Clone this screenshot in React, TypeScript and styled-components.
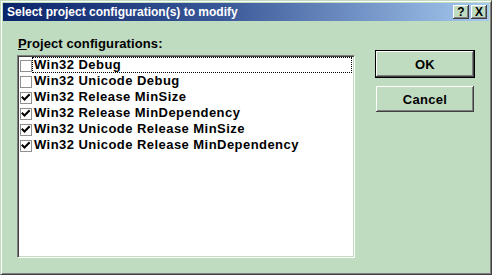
import styled, { createGlobalStyle } from "styled-components";

const GlobalStyle = createGlobalStyle`
  body {
    margin: 0;
    font-family: "Liberation Sans", Arial, sans-serif;
    background: #c0dcc0;
  }
`;

const Window = styled.div`
  width: 492px;
  height: 275px;
  box-sizing: border-box;
  background: #c0dcc0;
  border: 1px solid;
  border-color: #c0dcc0 #404040 #404040 #c0dcc0;
  box-shadow: inset 1px 1px #ffffff, inset -1px -1px #808080;
  padding: 2px;
  display: flex;
  flex-direction: column;
`;

const TitleBar = styled.div`
  height: 18px;
  display: flex;
  align-items: center;
  padding: 0 2px;
  background: linear-gradient(to right, #0a246a 0%, #3a5898 45%, #a6caf0 100%);
`;

const Title = styled.div`
  flex: 1;
  padding-left: 2px;
  color: #ffffff;
  font-weight: bold;
  font-size: 12px;
  line-height: 18px;
  white-space: nowrap;
`;

const CaptionButton = styled.div`
  width: 16px;
  height: 14px;
  box-sizing: border-box;
  margin-left: 2px;
  background: #c0dcc0;
  box-shadow: inset -1px -1px #404040, inset 1px 1px #ffffff,
    inset -2px -2px #808080;
  display: flex;
  align-items: center;
  justify-content: center;
  font-weight: bold;
  font-size: 12px;
  line-height: 12px;
  color: #000;
`;

const Body = styled.div`
  flex: 1;
  display: flex;
  padding: 15px 0 0 14px;
`;

const LeftColumn = styled.div`
  display: flex;
  flex-direction: column;
`;

const Label = styled.div`
  height: 15px;
  margin-bottom: 4px;
  padding-left: 1px;
  font-weight: bold;
  font-size: 13px;
  letter-spacing: 0.1px;
  line-height: 15px;
  color: #000;

  u {
    text-decoration-thickness: 1px;
    text-underline-offset: 1px;
  }
`;

const ListBox = styled.div`
  width: 338px;
  height: 203px;
  box-sizing: border-box;
  padding: 1px;
  background: #ffffff;
  border: 1px solid;
  border-color: #808080 #ffffff #ffffff #808080;
  box-shadow: inset 1px 1px #404040, inset -1px -1px #c0dcc0;
`;

const Row = styled.div`
  height: 16px;
  display: flex;
  align-items: flex-start;
`;

const CheckBox = styled.div`
  width: 12px;
  height: 12px;
  box-sizing: border-box;
  margin: 3px 0 0 1px;
  border: 1px solid #909090;
  background: #ffffff;
  display: flex;
`;

const ItemText = styled.div<{ $focused?: boolean }>`
  flex: 1;
  height: 16px;
  box-sizing: border-box;
  margin-right: 1px;
  padding-left: 1px;
  border: 1px dotted ${(p) => (p.$focused ? "#000" : "transparent")};
  font-weight: bold;
  font-size: 13px;
  letter-spacing: 0.45px;
  line-height: 14px;
  color: #000;
  white-space: nowrap;
`;

const RightColumn = styled.div`
  margin-left: 20px;
  padding-top: 14px;
  display: flex;
  flex-direction: column;
  gap: 7px;
`;

const Button = styled.div<{ $default?: boolean }>`
  width: 100px;
  height: 28px;
  box-sizing: border-box;
  background: #c0dcc0;
  border: 1px solid ${(p) => (p.$default ? "#000" : "transparent")};
  box-shadow: inset -1px -1px #404040, inset 1px 1px #ffffff,
    inset -2px -2px #808080;
  display: flex;
  align-items: center;
  justify-content: center;
  font-weight: bold;
  font-size: 13px;
  letter-spacing: 0.3px;
  color: #000;
`;

const items = [
  { name: "Win32 Debug", checked: false },
  { name: "Win32 Unicode Debug", checked: false },
  { name: "Win32 Release MinSize", checked: true },
  { name: "Win32 Release MinDependency", checked: true },
  { name: "Win32 Unicode Release MinSize", checked: true },
  { name: "Win32 Unicode Release MinDependency", checked: true },
];

function Check() {
  return (
    <svg width="10" height="10" viewBox="0 0 10 10">
      <polyline
        points="1.5,4.5 3.5,6.5 8,2"
        fill="none"
        stroke="#000"
        strokeWidth="2"
        strokeLinecap="square"
      />
    </svg>
  );
}

export default function App() {
  return (
    <>
      <GlobalStyle />
      <Window>
        <TitleBar>
          <Title>Select project configuration(s) to modify</Title>
          <CaptionButton>?</CaptionButton>
          <CaptionButton>X</CaptionButton>
        </TitleBar>
        <Body>
          <LeftColumn>
            <Label>
              <u>P</u>roject configurations:
            </Label>
            <ListBox>
              {items.map((item, i) => (
                <Row key={item.name}>
                  <CheckBox>{item.checked && <Check />}</CheckBox>
                  <ItemText $focused={i === 0}>{item.name}</ItemText>
                </Row>
              ))}
            </ListBox>
          </LeftColumn>
          <RightColumn>
            <Button $default>OK</Button>
            <Button>Cancel</Button>
          </RightColumn>
        </Body>
      </Window>
    </>
  );
}
